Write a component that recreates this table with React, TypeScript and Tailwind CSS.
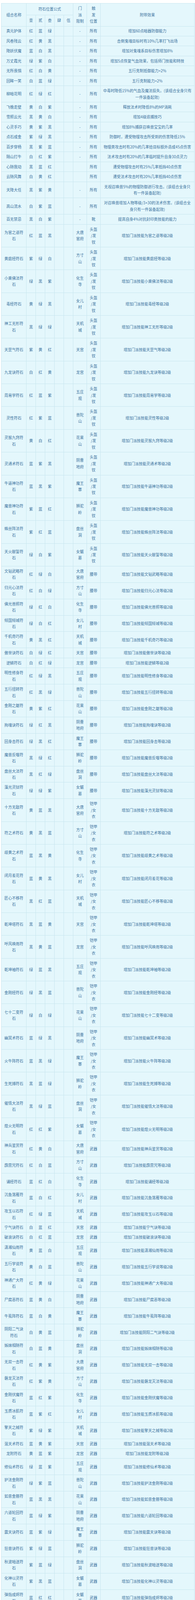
const general: string[][] = [
  ['真元护体', '红', '蓝', '绿', '-', '所有', '增加60点暗器防御能力'],
  ['风卷残云', '红', '黄', '黑', '-', '所有', '击倒鬼魂目标时有10%几率打飞出场'],
  ['降妖伏魔', '蓝', '白', '黑', '-', '所有', '增加对鬼魂系目标伤害增加8%'],
  ['万丈霞光', '绿', '紫', '白', '-', '所有', '增加5点恢复气血效果，包括师门技能和特技'],
  ['无所畏惧', '红', '白', '黄', '-', '所有', '五行克制抵御能力+2%'],
  ['回眸一笑', '白', '蓝', '绿', '-', '所有', '五行克制能力+2%'],
  ['柳暗花明', '红', '绿', '红', '-', '所有', '中毒时降低15%的气血及魔法损失。(该组合全身只有|一件装备起效)'],
  ['飞檐走壁', '黄', '白', '紫', '-', '所有', '释放法术时降低8%的MP消耗'],
  ['雪照云光', '黑', '黄', '白', '-', '所有', '增加4级追捕技巧'],
  ['心灵手巧', '黄', '紫', '黑', '-', '所有', '增加8%捕获召唤兽宝宝的几率'],
  ['点石成金', '紫', '绿', '黑', '-', '所有', '防御时，遭受物理攻击所受到的伤害降低15%'],
  ['百步穿杨', '黑', '紫', '蓝', '-', '所有', '物理类攻击时有20%的几率给目标额外造成45点伤害'],
  ['隔山打牛', '白', '红', '紫', '-', '所有', '法术攻击时有20%的几率临时提升自身30点灵力'],
  ['心随我动', '黑', '蓝', '红', '', '所有', '遭受物理攻击时有25%几率抵挡40点伤害'],
  ['云随风舞', '白', '黄', '红', '', '所有', '遭受法术攻击时有20%几率抵挡40点伤害'],
  ['天降大任', '黑', '紫', '黄', '-', '所有', '无视召唤兽5%的物理防御进行攻击。(该组合全身只|有一件装备起效)'],
  ['高山流水', '白', '紫', '蓝', '-', '所有', '对召唤兽增加人物等级/3+30的法术伤害。(该组合全|身只有一件装备起效)'],
  ['百无禁忌', '黑', '白', '紫', '-', '靴', '提高自身4%对抗封印类技能的能力'],
];

// skill colours sect slot
const sectData = `为官之道 红蓝黑 大唐官府 头盔
黄庭经 紫绿白 方寸山 头盔
小乘佛法 绿黑紫 化生寺 头盔
毒经 黄绿黑 女儿村 头盔
神工无形 黑绿绿 天机城 头盔
天罡气 紫黄红 天宫 头盔
九龙诀 白红黄 龙宫 头盔
周易学 红蓝紫 五庄观 头盔
灵性 红紫蓝 普陀山 头盔
灵猴九窍 黄白红 花果山 头盔
灵通术 蓝紫黑 阴曹地府 头盔
牛逼神功 蓝黑紫 魔王寨 头盔
魔兽神功 紫蓝红 狮驼岭 头盔
蛛丝阵法 紫红蓝 盘丝洞 头盔
天火献誓 绿白紫 女魃墓 头盔
文韬武略 红绿白 大唐官府 腰带
归元心法 红白绿 方寸山 腰带
佛光普照 绿红白 化生寺 腰带
倾国倾城 绿白红 女儿村 腰带
千机奇巧 黄黑红 天机城 腰带
傲世诀 白绿红 天宫 腰带
逆鳞 白红绿 龙宫 腰带
明性修身 红绿黑 五庄观 腰带
五行扭转 红黑绿 普陀山 腰带
金刚之躯 黄紫红 花果山 腰带
拘魂诀 绿红黑 阴曹地府 腰带
回身击 绿黑红 魔王寨 腰带
魔兽反噬 黑绿红 狮驼岭 腰带
盘丝大法 黑红绿 盘丝洞 腰带
藻光灵狱 绿绿紫 女魃墓 腰带
十方无敌 黄蓝黑 大唐官府 铠甲
符之术 黄黑蓝 方寸山 铠甲
歧黄之术 蓝黑黄 化生寺 铠甲
闭月羞花 蓝黄黑 女儿村 铠甲
匠心不移 黑红蓝 天机城 铠甲
乾坤塔 黑蓝黄 天宫 铠甲
呼风唤雨 黑黄蓝 龙宫 铠甲
乾坤袖 绿蓝黑 五庄观 铠甲
金刚经 绿黑蓝 普陀山 铠甲
七十二变 绿白绿 花果山 铠甲
幽冥术 蓝绿黑 阴曹地府 铠甲
火牛阵 蓝黑绿 魔王寨 铠甲
生死搏 黑蓝绿 狮驼岭 铠甲
催情大法 黑绿蓝 盘丝洞 铠甲
煌火无明 红红紫 女魃墓 铠甲
神兵鉴赏 红黄白 大唐官府 武器
霹雳咒 红白蓝 方寸山 武器
诵经 蓝红白 化生寺 武器
沉鱼落雁 蓝白红 女儿村 武器
攻玉以石 红绿蓝 天机城 武器
宁气诀 白蓝红 天宫 武器
破浪诀 白红蓝 龙宫 武器
潇湘仙雨 黄蓝白 五庄观 武器
五行学说 黄白蓝 普陀山 武器
神通广大 红黄绿 花果山 武器
尸腐恶 蓝黄白 阴曹地府 武器
牛虱阵 蓝白黄 魔王寨 武器
阴阳二气诀 白黄蓝 狮驼岭 武器
姊妹相随 白蓝黄 盘丝洞 武器
无双一击 红黄紫 大唐官府 武器
磐龙灭法 红紫黄 方寸山 武器
金刚伏魔 蓝红紫 化生寺 武器
玉质冰肌 蓝紫红 女儿村 武器
擎天之械 紫绿紫 天机城 武器
混天术 蓝黄紫 天宫 武器
龙附 黄蓝紫 龙宫 武器
修仙术 绿蓝紫 五庄观 武器
护法金刚 绿紫蓝 普陀山 武器
如意金箍 蓝黑黑 花果山 武器
六道轮回 蓝绿紫 阴曹地府 武器
震天诀 蓝紫绿 魔王寨 武器
狂兽诀 紫绿蓝 狮驼岭 武器
秋波暗送 紫蓝绿 盘丝洞 武器
化神以灵 紫黑蓝 女魃墓 武器
弹指成烬 蓝红红 女魃墓 武器
紫薇之术 黄白黑 大唐官府 项链
神道无念 红黑白 方寸山 项链
大慈大悲 白红黑 化生寺 项链
香飘兰麝 白黑红 女儿村 项链
探奥索隐 蓝红黑 天机城 项链
清明自在 黑白红 天宫 项链
龙腾 黑红白 龙宫 项链
混元道果 绿白黑 五庄观 项链
观音咒 绿黑白 普陀山 项链
齐天逞胜 黑黄红 花果山 项链`;

const slotLines: Record<string, string> = {
  头盔: '头盔|/发|钗',
  铠甲: '铠甲|/女|衣',
};

const sectRows: string[][] = sectData.split('\n').map((line) => {
  const [skill, colors, sect, slot] = line.trim().split(' ');
  const name = skill + '符石';
  return [
    name.length > 5 ? name.slice(0, 5) + '|' + name.slice(5) : name,
    colors[0],
    colors[1],
    colors[2],
    sect.length > 2 ? sect.slice(0, 2) + '|' + sect.slice(2) : sect,
    slotLines[slot] ?? slot,
    '增加门派技能' + skill + '等级2级',
  ];
});

const rows = [...general, ...sectRows];

// row height by number of text lines (16.45px a line, 8px padding, 1px border)
const rowHeight: Record<number, string> = {
  1: 'h-[25.45px]',
  2: 'h-[41.9px]',
  3: 'h-[58.35px]',
};

function Lines({ t }: { t: string }) {
  return (
    <div>
      {t.split('|').map((s, i) => (
        <div key={i} className="whitespace-nowrap">
          {s}
        </div>
      ))}
    </div>
  );
}

const cell = 'flex items-center justify-center text-center border-r border-b border-[#c8e6ef]';
const cols = 'grid grid-cols-[64px_24px_24px_24px_24px_24px_35px_34.5px_241.5px]';

export default function App() {
  return (
    <div className="bg-white pt-[8px] pl-[3px]">
      <div className="w-[497px] border-l border-t border-[#c8e6ef] bg-[#e4f7fc] text-[#3e74a1] text-[9.7px] leading-[16.45px] font-['Noto_Sans_CJK_SC','Noto_Sans',sans-serif]">
        {/* header */}
        <div className="flex h-[58.5px]">
          <div className={`${cell} w-[64px]`}>组合名称</div>
          <div className="flex w-[120px] flex-col">
            <div className={`${cell} h-[29.7px]`}>符石位置公式</div>
            <div className="grid flex-1 grid-cols-5">
              {['壹', '贰', '叁', '肆', '伍'].map((h) => (
                <div key={h} className={cell}>{h}</div>
              ))}
            </div>
          </div>
          <div className={`${cell} w-[35px]`}>
            <Lines t="门|派|限制" />
          </div>
          <div className={`${cell} w-[34.5px]`}>
            <Lines t="触|发|位置" />
          </div>
          <div className={`${cell} w-[241.5px]`}>附带效果</div>
        </div>

        {rows.map((r, i) => {
          const n = Math.max(...r.map((c) => c.split('|').length));
          return (
            <div key={i} className={`${cols} ${rowHeight[n]}`}>
              <div className={cell}><Lines t={r[0]} /></div>
              <div className={cell}>{r[1]}</div>
              <div className={cell}>{r[2]}</div>
              <div className={cell}>{r[3]}</div>
              <div className={cell}></div>
              <div className={cell}></div>
              <div className={cell}><Lines t={r[4]} /></div>
              <div className={cell}><Lines t={r[5]} /></div>
              <div className={cell}><Lines t={r[6]} /></div>
            </div>
          );
        })}
      </div>
    </div>
  );
}
